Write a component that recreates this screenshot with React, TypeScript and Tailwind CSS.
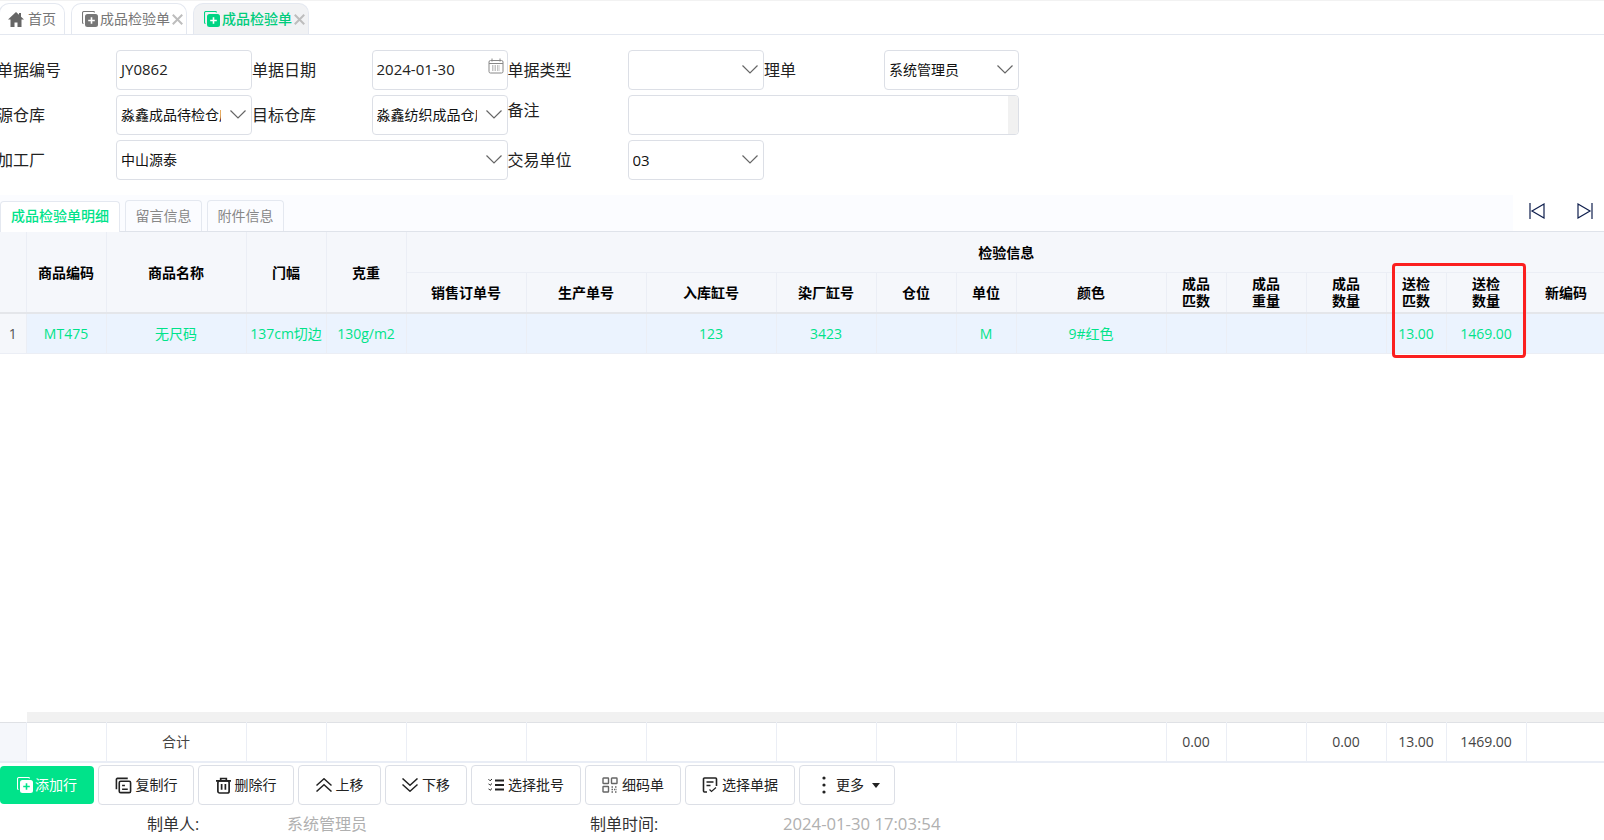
const green = "text-[#00e38a]"

// 重叠方块 + 加号,tab 和添加行共用
function CopyPlus({ fill, back, plus }: { fill: string; back: string; plus: string }) {
  return (
    <svg viewBox="0 0 16 16" className="w-4 h-4 shrink-0">
      <path d="M12.5 1.5a1 1 0 0 0-1-1H2a1.5 1.5 0 0 0-1.5 1.5v9.5a1 1 0 0 0 1 1" fill="none" stroke={back} strokeWidth="1.1" />
      <rect x="3" y="3" width="13" height="13" rx="2.5" fill={fill} />
      <path d="M9.5 6.2v6.6M6.2 9.5h6.6" stroke={plus} strokeWidth="1.6" />
    </svg>
  )
}

function CloseX() {
  return (
    <svg viewBox="0 0 10 10" className="w-[11px] h-[11px] shrink-0" stroke="#bdbdbd" strokeWidth="1.8">
      <path d="M.7.7l8.6 8.6M9.3.7L.7 9.3" />
    </svg>
  )
}

function Chevron() {
  return (
    <svg viewBox="0 0 16 9" className="w-4 h-[9px] shrink-0 -mt-0.5" fill="none" stroke="#666" strokeWidth="1.2">
      <path d="M.5.5L8 8l7.5-7.5" />
    </svg>
  )
}

function Select({ text, className = "text-sm" }: { text?: string; className?: string }) {
  return (
    <div className={`h-10 flex items-center pl-1 pr-[5px] bg-white border border-[#dcdfe6] rounded-[4px] text-[#111] ${className}`}>
      <span className="flex-1 mr-[9px] overflow-hidden whitespace-nowrap">{text}</span>
      <Chevron />
    </div>
  )
}

function Label({ text, className = "" }: { text: string; className?: string }) {
  return <div className={`flex items-center text-base text-[#222] ${className}`}>{text}</div>
}

const groupCols = [
  { name: "销售订单号", w: "w-[120px]" },
  { name: "生产单号", w: "w-[120px]" },
  { name: "入库缸号", w: "w-[130px]", val: "123" },
  { name: "染厂缸号", w: "w-[100px]", val: "3423" },
  { name: "仓位", w: "w-[80px]" },
  { name: "单位", w: "w-[60px]", val: "M" },
  { name: "颜色", w: "w-[150px]", val: "9#红色" },
  { name: "成品匹数", w: "w-[60px]", two: true, total: "0.00" },
  { name: "成品重量", w: "w-[80px]", two: true },
  { name: "成品数量", w: "w-[80px]", two: true, total: "0.00" },
  { name: "送检匹数", w: "w-[60px]", two: true, val: "13.00", total: "13.00" },
  { name: "送检数量", w: "w-[80px]", two: true, val: "1469.00", total: "1469.00" },
  { name: "新编码", w: "w-[80px]" },
]

const leadCols = [
  { name: "商品编码", w: "w-[80px]", val: "MT475" },
  { name: "商品名称", w: "w-[140px]", val: "无尺码", total: "合计" },
  { name: "门幅", w: "w-[80px]", val: "137cm切边" },
  { name: "克重", w: "w-[80px]", val: "130g/m2" },
]

const cell = "border-r border-[#ebeef5] p-0"
const headText = "text-sm font-bold text-black"

const actions = [
  { text: "复制行", w: "w-[96px]", icon: <svg viewBox="0 0 18 18" className="w-[17px] h-[17px]" fill="none" stroke="#222" strokeWidth="1.7"><path d="M13.5 1.5H2.5a1 1 0 0 0-1 1V13" /><rect x="4.5" y="4.5" width="12" height="12" rx="1.5" /><path d="M7.5 9h3M7.5 13h6" /></svg> },
  { text: "删除行", w: "w-[96px]", icon: <svg viewBox="0 0 16 18" className="w-[15px] h-[17px]" fill="none" stroke="#222" strokeWidth="1.8"><path d="M0 4h16M5 4V1.5h6V4" /><rect x="2" y="4" width="12" height="13" rx="2" /><path d="M6 7.5v6M10 7.5v6" /></svg> },
  { text: "上移", w: "w-[83px]", icon: <svg viewBox="0 0 16 14" className="w-4 h-3.5" fill="none" stroke="#222" strokeWidth="1.5"><path d="M.5 7.5L8 .8l7.5 6.7M.5 13.5L8 6.8l7.5 6.7" /></svg> },
  { text: "下移", w: "w-[82px]", icon: <svg viewBox="0 0 16 14" className="w-4 h-3.5" fill="none" stroke="#222" strokeWidth="1.5"><path d="M.5.5L8 7.2 15.5.5M.5 6.5L8 13.2l7.5-6.7" /></svg> },
  { text: "选择批号", w: "w-[110px]", icon: <svg viewBox="0 0 16 14" className="w-4 h-3.5" fill="none" stroke="#222"><path d="M7 2.5h9M7 7h9M7 11.5h9" strokeWidth="1.8" /><path d="M.5 1.2l1.6 1.6L4 1M.5 5.7l1.6 1.6L4 5.5M.5 10.7l1.6 1.6L4 10.5" strokeWidth="1" /></svg> },
  { text: "细码单", w: "w-[96px]", icon: <svg viewBox="0 0 16 16" className="w-4 h-4" fill="none" stroke="#666" strokeWidth="1.4"><rect x="1" y="1" width="5.5" height="5.5" rx=".5" /><rect x="9.5" y="1" width="5.5" height="5.5" rx=".5" /><rect x="1" y="9.5" width="5.5" height="5.5" rx=".5" /><path d="M9.5 10h1.5M13 10h2M9.5 12.5h5.5M9.5 15h1.5M13 15h2" strokeDasharray="1.5 1" /></svg> },
  { text: "选择单据", w: "w-[110px]", icon: <svg viewBox="0 0 16 16" className="w-4 h-4" fill="none" stroke="#222" strokeWidth="1.6"><path d="M5 15H2.5a1 1 0 0 1-1-1V2a1 1 0 0 1 1-1h11a1 1 0 0 1 1 1v7" /><path d="M4.5 5h7M4.5 8.5h4" /><path d="M7.5 12.5l2 2 4.5-4" strokeWidth="1.2" /></svg> },
]

export default function App() {
  return (
    <div className="relative w-[1604px] h-[840px] overflow-hidden bg-white flex flex-col font-['Open_Sans','Noto_Sans_CJK_SC',sans-serif]">
      {/* 顶部 tab */}
      <div className="h-[35px] shrink-0 flex items-end gap-1.5 border-t border-t-[#f2f2f2] border-b border-b-[#e4e8f0] pt-[2px]">
        <div className="h-full w-[66px] flex items-center justify-center gap-1 border border-b-0 border-[#e4e8f0] rounded-t-[10px] -ml-px text-sm text-[#777]">
          <svg viewBox="0 0 16 15" className="w-4 h-[15px] shrink-0" fill="#666">
            <path d="M8 0L0 7.5h2.5V15h4v-4.5h3V15h4V7.5H16L13 4.7V1h-2v1.8z" />
          </svg>
          首页
        </div>
        <div className="h-full w-[116px] flex items-center pl-2.5 gap-0.5 border border-b-0 border-[#e4e8f0] rounded-t-[10px] text-sm text-[#777]">
          <CopyPlus fill="#777" back="#777" plus="#fff" />
          <span className="whitespace-nowrap">成品检验单</span>
          <CloseX />
        </div>
        <div className="h-full w-[116px] flex items-center pl-2.5 gap-0.5 border border-b-0 border-[#e4e8f0] rounded-t-[10px] bg-[#f1f2f4] text-sm text-[#00cc7c]">
          <CopyPlus fill="#00d483" back="#00d483" plus="#fff" />
          <span className="whitespace-nowrap font-medium">成品检验单</span>
          <CloseX />
        </div>
      </div>

      {/* 表单 */}
      <div className="shrink-0 -ml-[3px] mt-[15px] grid grid-cols-[119px_136px_119.5px_136px_120px_136.5px_120px_135px] auto-rows-[40px] gap-y-[5px] w-fit">
        <Label text="单据编号" />
        <div className="h-10 flex items-center pl-1 pb-0.5 border border-[#dcdfe6] rounded-[4px] text-[15px] text-[#222]">JY0862</div>
        <Label text="单据日期" />
        <div className="h-10 flex items-center justify-between pl-1 pr-[3px] pb-0.5 border border-[#dcdfe6] rounded-[4px] text-[15px] text-[#222]">
          2024-01-30
          <svg viewBox="0 0 16 16" className="w-4 h-4 -mt-1.5" fill="none" stroke="#888">
            <rect x="1" y="2.5" width="14" height="12.5" rx="1.5" />
            <path d="M4 .5v3M12 .5v3M1 5.5h14" />
            <path d="M4 8h8M4 10h8M4 12h8" strokeDasharray="1.5 1" />
          </svg>
        </div>
        <Label text="单据类型" />
        <Select />
        <Label text="理单" />
        <Select text="系统管理员" />

        <Label text="源仓库" />
        <Select text="淼鑫成品待检仓库" />
        <Label text="目标仓库" />
        <Select text="淼鑫纺织成品仓库" />
        <Label text="备注" className="pb-2.5" />
        <div className="col-span-3 h-10 flex justify-end border border-[#dcdfe6] rounded-[4px] overflow-hidden">
          <div className="w-2.5 bg-[#f1f1f1]" />
        </div>

        <Label text="加工厂" />
        <Select text="中山源泰" className="col-span-3 text-sm" />
        <Label text="交易单位" />
        <Select text="03" className="text-[15px]" />
      </div>

      {/* 明细 tab */}
      <div className="shrink-0 mt-[15px] h-[37px] flex items-end bg-[#fbfcff] border-b border-[#dfe3ea]">
        <div className="h-[31px] w-[120px] flex items-center justify-center pb-0.5 bg-white border border-b-0 border-[#e4e8f0] rounded-t text-sm font-medium text-[#00e38a] -mb-px">成品检验单明细</div>
        <div className="ml-[5px] h-[31px] w-[77px] flex items-center justify-center border border-b-0 border-[#e4e8f0] rounded-t text-sm text-[#888]">留言信息</div>
        <div className="ml-[5px] h-[31px] w-[77px] flex items-center justify-center border border-b-0 border-[#e4e8f0] rounded-t text-sm text-[#888]">附件信息</div>
        <div className="ml-auto self-stretch w-[91px] bg-white flex items-center justify-between pl-4 pr-[11px] pb-1">
          <svg viewBox="0 0 16 16" className="w-4 h-4" fill="none" stroke="#0f1f4d" strokeWidth="1.2"><path d="M1 0v16M15 1L3 8l12 7z" /></svg>
          <svg viewBox="0 0 16 16" className="w-4 h-4" fill="none" stroke="#0f1f4d" strokeWidth="1.2"><path d="M15 0v16M1 1l12 7-12 7z" /></svg>
        </div>
      </div>

      {/* 表格 */}
      <div className="flex-1 min-h-0 flex flex-col">
        <table className="table-fixed w-[1604px] shrink-0 border-collapse">
          <colgroup>
            <col className="w-[26px]" />
            {leadCols.map((c) => <col key={c.name} className={c.w} />)}
            {groupCols.map((c) => <col key={c.name} className={c.w} />)}
          </colgroup>
          <thead className="bg-[#f5f7fb]">
            <tr className="h-10 border-b border-[#ebeef5]">
              <th rowSpan={2} className={`${cell} border-b-2 border-b-[#e4e6ea]`} />
              {leadCols.map((c) => (
                <th key={c.name} rowSpan={2} className={`${cell} ${headText} pt-[2px]! border-b-2 border-b-[#e4e6ea]`}>{c.name}</th>
              ))}
              <th colSpan={13} className={`${headText} p-0 pt-[3px]`}>检验信息</th>
            </tr>
            <tr className="h-[41px] border-b-2 border-[#e4e6ea]">
              {groupCols.map((c) => (
                <th key={c.name} className={`${cell} ${headText} ${c.two ? "leading-[17.5px]" : "pt-0.5"}`}>
                  {c.two ? <>{c.name.slice(0, 2)}<br />{c.name.slice(2)}</> : c.name}
                </th>
              ))}
            </tr>
          </thead>
          <tbody>
            <tr className="h-10 border-b border-[#ebeef5] bg-[#ebf3fe]">
              <td className={`${cell} pt-0.5 bg-[#f5f7fb] text-sm text-[#555] text-center`}>1</td>
              {leadCols.map((c) => (
                <td key={c.name} className={`${cell} pt-0.5 text-sm ${green} text-center whitespace-nowrap overflow-hidden`}>{c.val}</td>
              ))}
              {groupCols.map((c) => (
                <td key={c.name} className={`${cell} pt-0.5 text-sm ${green} text-center`}>{c.val}</td>
              ))}
            </tr>
          </tbody>
        </table>
        <div className="flex-1" />
        <div className="h-2.5 ml-[27px] bg-[#f1f1f1] shrink-0" />
        <table className="table-fixed w-[1604px] shrink-0 border-collapse border-t border-[#dfe1e5]">
          <colgroup>
            <col className="w-[26px]" />
            {leadCols.map((c) => <col key={c.name} className={c.w} />)}
            {groupCols.map((c) => <col key={c.name} className={c.w} />)}
          </colgroup>
          <tbody>
            <tr className="h-10 border-b-2 border-[#e9edf5]">
              <td className={`${cell} bg-[#f5f7fb]`} />
              {leadCols.map((c) => (
                <td key={c.name} className={`${cell} text-sm text-[#444] text-center`}>{c.total}</td>
              ))}
              {groupCols.map((c) => (
                <td key={c.name} className={`${cell} text-sm text-[#444] text-center`}>{c.total}</td>
              ))}
            </tr>
          </tbody>
        </table>
      </div>

      {/* 操作按钮 */}
      <div className="shrink-0 mt-0.5 h-10 flex items-center gap-1">
        <button className="w-[94px] h-[38px] flex items-center justify-center gap-0.5 bg-[#00e38a] rounded-[4px] text-sm text-white">
          <CopyPlus fill="#fff" back="#fff" plus="#00e38a" />
          添加行
        </button>
        {actions.map((a) => (
          <button key={a.text} className={`${a.w} h-10 flex items-center justify-center gap-1 border border-[#dcdfe6] rounded-[4px] text-sm text-[#222]`}>
            {a.icon}
            {a.text}
          </button>
        ))}
        <button className="w-[96px] h-10 flex items-center justify-center pl-2 border border-[#dcdfe6] rounded-[4px] text-sm text-[#222]">
          <svg viewBox="0 0 4 18" className="w-1 h-[18px] mr-2.5" fill="#222">
            <circle cx="2" cy="2" r="1.6" />
            <circle cx="2" cy="9" r="1.6" />
            <circle cx="2" cy="16" r="1.6" />
          </svg>
          更多
          <span className="ml-2 w-0 h-0 border-x-4 border-x-transparent border-t-[5px] border-t-[#222]" />
        </button>
      </div>

      {/* 制单信息 */}
      <div className="shrink-0 h-[35px] pt-0.5 flex items-center text-base">
        <span className="ml-[147px] w-[140px] text-[#333]">制单人:</span>
        <span className="w-[303px] text-[#b0b0b0]">系统管理员</span>
        <span className="w-[193px] text-[#333]">制单时间:</span>
        <span className="text-[16.7px] text-[#b0b0b0]">2024-01-30 17:03:54</span>
      </div>

      {/* 红框标注 */}
      <div className="absolute left-[1392px] top-[263px] w-[134px] h-[95px] border-[3px] border-[#fb1f1f] rounded" />
    </div>
  )
}
